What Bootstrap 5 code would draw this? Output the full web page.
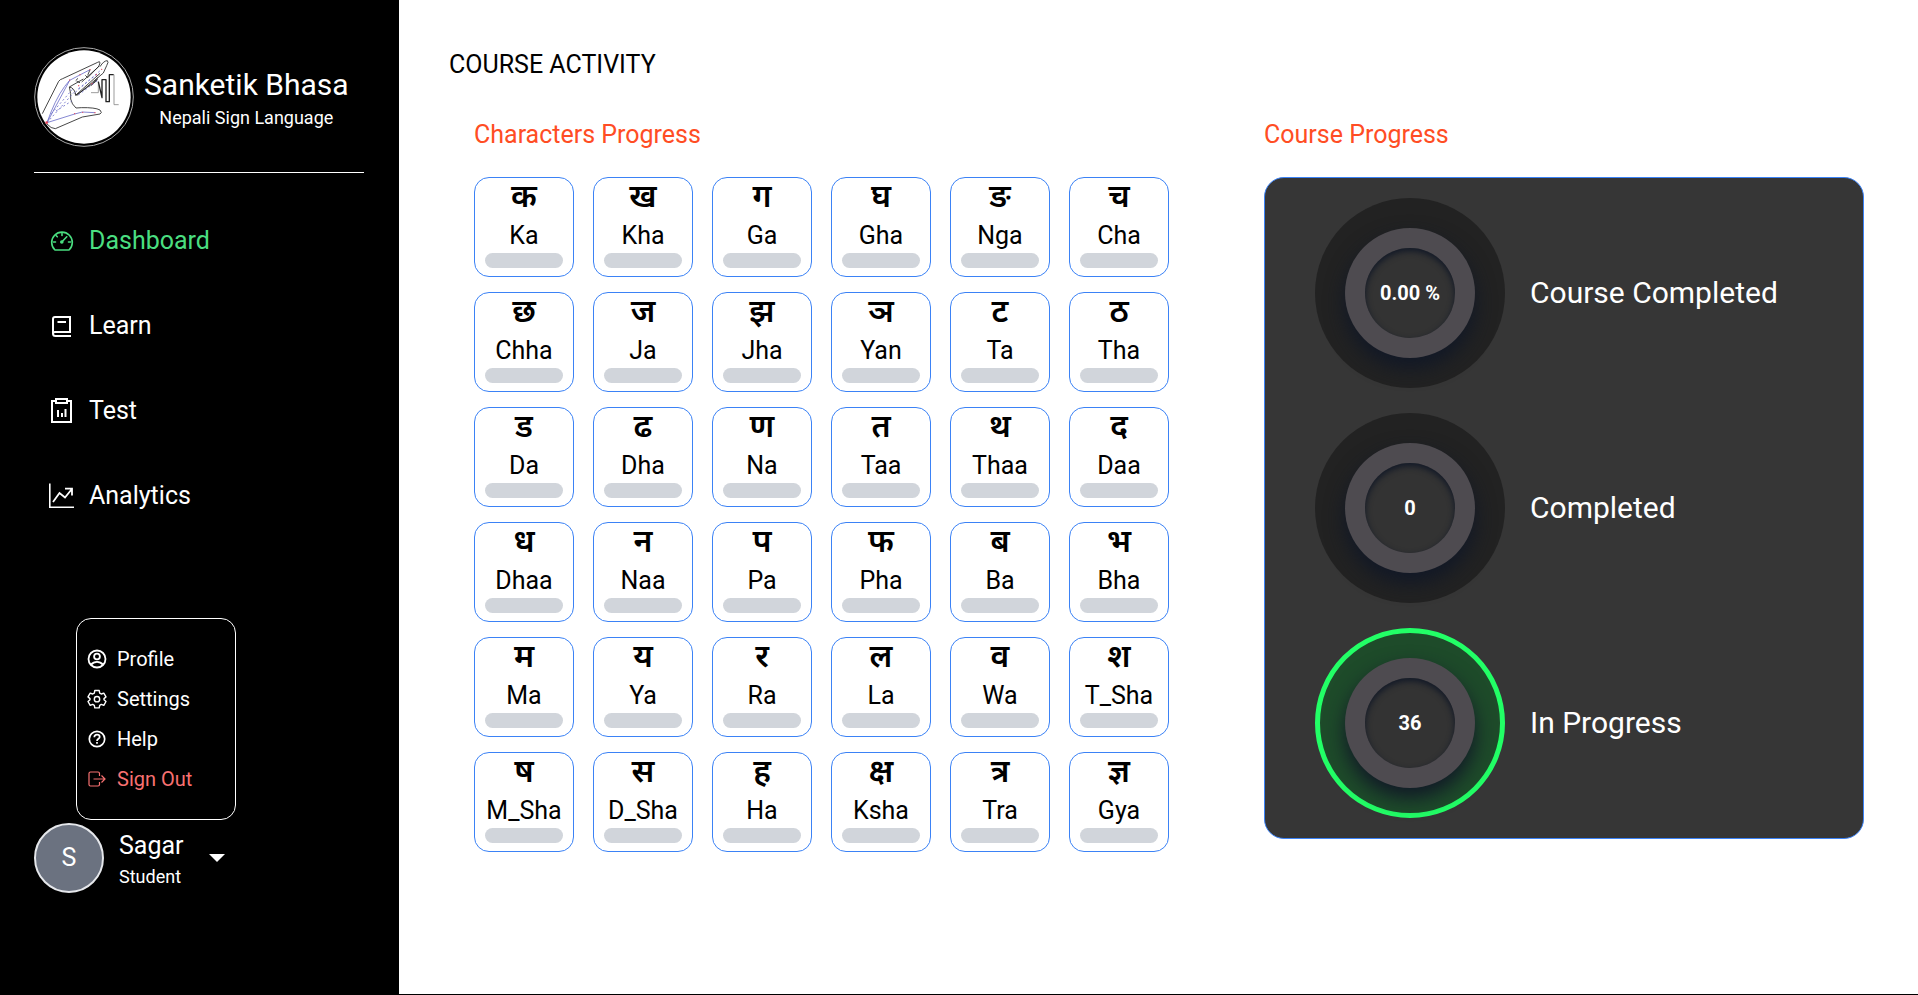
<!DOCTYPE html>
<html lang="en">
<head>
<meta charset="utf-8">
<meta name="viewport" content="width=device-width, initial-scale=1">
<title>Sanketik Bhasa</title>
<link href="https://cdn.jsdelivr.net/npm/bootstrap@5.3.0/dist/css/bootstrap.min.css" rel="stylesheet">
<style>
  body { font-family: Roboto, "Noto Sans Devanagari", "Noto Sans", sans-serif; color: #000; font-size: 25px; line-height: 36px; }
  h1, h2, h3, p { font-weight: 400; margin: 0; line-height: 36px; }
  h2, h3 { font-size: 25px; }
  .sidebar { width: 399px; padding: 47px 35px 40px 34px; }
  .brand { gap: 10px; }
  .brand-logo { width: 100px; height: 100px; }
  .brand-text { padding-top: 6px; }
  .brand-name { font-size: 30px; }
  .fine { font-size: 18px; line-height: 30px; }
  .rule { height: 1px; background: #fff; margin: 25px 0 25px; opacity: 1; border: 0; }
  .side-nav .nav-link { height: 85px; padding: 0 15px; gap: 14px; color: #fff; }
  .side-nav .nav-link.active { color: #4ade80; }
  .side-nav svg { width: 26px; height: 26px; }
  .user-menu { width: 160px; margin: 80px 0 3px 42px; padding: 20px 9px; border: 1px solid #fff; border-radius: 15px; font-size: 20px; }
  .user-menu a { height: 40px; gap: 9px; color: #fff; }
  .user-menu a.leave { color: #f87171; }
  .user-menu svg { width: 22px; height: 22px; }
  .avatar { width: 70px; height: 70px; background: #6b7280; border: 2px solid #e5e7eb; }
  .user-btn { gap: 15px; font-size: 25px; }
  .user-btn .fine { line-height: 24px; }
  .user-btn .caret { margin-left: 10px; }
  .content { padding: 47px 54px 50px 50px; border-bottom: 1px solid #000; }
  .accent { color: #ff4d24; }
  .boards { margin: 34px 0 0 25px; gap: 40px; }
  .letters { display: grid; grid-template-columns: repeat(6, 100px); gap: 15px 19px; }
  .letter { height: 100px; padding: 0 10px; border: 1px solid #3b82f6; border-radius: 15px; text-align: center; }
  .letter b { display: block; font-size: 32px; font-weight: 600; line-height: 36px; height: 40px; }
  .letter span { display: block; line-height: 35px; white-space: nowrap; margin: 0 -10px; }
  .letter .progress { height: 15px; border-radius: 8px; background: #d1d5db; }
  .course { width: 600px; }
  .panel { background: #363636; border: 1px solid #3b82f6; border-radius: 20px; padding: 20px 50px; gap: 25px; color: #fff; font-size: 30px; }
  .stat { gap: 25px; }
  .dial { width: 190px; height: 190px; background: #222; border-radius: 50%; }
  .dial.on { background: #1e4b2a; border: 5px solid #22ff66; }
  .ring { width: 130px; height: 130px; border-radius: 50%; background: #4e4b50; box-shadow: 0 10px 20px #111827; }
  .core { width: 90px; height: 90px; border-radius: 50%; background: #333; box-shadow: inset 0 3px 6px #111827; font-size: 20px; font-weight: 700; }
</style>
</head>
<body>
<div class="d-flex min-vh-100">
  <aside class="sidebar bg-black text-white flex-shrink-0">
    <header class="brand d-flex align-items-center">
      <svg class="brand-logo flex-shrink-0" viewBox="12 6 300 300" fill="none" stroke="#222" stroke-width="2.5" stroke-linejoin="round" aria-hidden="true">
        <circle cx="162" cy="156" r="148" fill="#000" stroke="#aaa" stroke-width="3"/>
        <circle cx="162" cy="156" r="140" fill="#fff" stroke="none"/>
        <path d="M37 206L86 109Q90 103 98 101L203 52Q210 47 210 54L206 65L155 111M210 65Q221 47 232 47Q237 50 230 62L220 84L142 150L134 146M210 85L140 148M204 97Q195 110 187 116L139 150M118 126Q134 128 138 153M118 126Q124 147 122 162Q125 178 138 189L154 188Q195 187 210 195Q218 204 210 207L157 216L76 251Q63 251 51 237M118 126L160 102M140 109L150 113M137 107L144 100M166 91L173 98L207 63M184 122L203 103M180 74L173 91"/>
        <g stroke="#6c6fc9" stroke-width="2.5"><path d="M51 233L119 106L180 74M51 233L63 201Q88 139 119 106M51 233L134 207L157 201L195 203"/><path stroke-dasharray="6 7" d="M51 233L132 142M64 206L130 130M78 198L125 168M136 142L215 73M145 131L199 89M145 150L205 105"/></g>
        <g fill="#e54458" stroke="none"><circle cx="50" cy="233" r="4"/><circle cx="119" cy="105" r="2"/><circle cx="150" cy="89" r="2"/><circle cx="180" cy="74" r="2"/><circle cx="215" cy="73" r="2"/><circle cx="199" cy="89" r="2"/><circle cx="146" cy="122" r="2"/><circle cx="186" cy="116" r="2"/><circle cx="134" cy="206" r="2"/><circle cx="158" cy="202" r="2"/><circle cx="195" cy="203" r="2"/></g>
        <path stroke="#888" d="M183 143H205V110M252 89V179H266"/>
        <path stroke-width="4" d="M205 110L216 158V104H228V170H238V89H251"/>
      </svg>
      <div class="brand-text text-center">
        <h1 class="brand-name">Sanketik Bhasa</h1>
        <p class="fine">Nepali Sign Language</p>
      </div>
    </header>
    <hr class="rule">
    <nav class="nav flex-column side-nav">
      <a class="nav-link active d-flex align-items-center" href="#" aria-current="page">
        <svg viewBox="0 0 26 26" fill="none" stroke="currentColor" stroke-width="1.6" stroke-linecap="round"><path d="M6 22A10.3 10.3 0 1 1 20 22Z" stroke-linejoin="round"/><path d="M13 5.5V7.5M7 7.5L8.3 8.8M4.5 14H6.5M19.5 14H21.5M17.8 8.8L12.5 14.2"/><circle cx="12.8" cy="14" r="1" fill="currentColor"/></svg>
        Dashboard</a>
      <a class="nav-link d-flex align-items-center" href="#">
        <svg viewBox="0 0 26 26" fill="none" stroke="currentColor" stroke-width="2"><path d="M22 23H6.500Q4 23 4 20.500V6Q4 4 6 4H21V19H6Q4 19 4 20.500M8.500 9H17"/></svg>
        Learn</a>
      <a class="nav-link d-flex align-items-center" href="#">
        <svg viewBox="0 0 26 26" fill="none" stroke="currentColor" stroke-width="2"><path d="M8 3H3V24H22V3H18M7 1H18V5H7Z"/><path d="M9 12V19M13 15V19M16.500 11V19"/></svg>
        Test</a>
      <a class="nav-link d-flex align-items-center" href="#">
        <svg viewBox="0 0 26 26" fill="none" stroke="currentColor" stroke-width="1.6"><path d="M.8 .5V24.200H25"/><path stroke-width="1.800" d="M4 19L10.500 10L16 14.500L22.500 6.500M16 5.700H23V12.500"/></svg>
        Analytics</a>
    </nav>
    <nav class="user-menu" aria-label="Account">
      <a class="d-flex align-items-center text-decoration-none" href="#">
        <svg viewBox="0 0 22 22" fill="none" stroke="currentColor" stroke-width="1.800"><circle cx="11" cy="11" r="8.500"/><circle cx="11" cy="8.500" r="2.900"/><path d="M4.800 16.800Q7.500 13.800 11 13.800T17.200 16.800"/></svg>
        Profile</a>
      <a class="d-flex align-items-center text-decoration-none" href="#">
        <svg viewBox="0 0 22 22" fill="none" stroke="currentColor" stroke-width="1.400" stroke-linejoin="round"><path d="M8.800 2.500H13.200L13.700 5.100L15.300 6L17.800 5.100L20 8.900L18 10.600V11.800L20 13.500L17.800 17.300L15.300 16.400L13.700 17.300L13.200 19.900H8.800L8.300 17.300L6.700 16.400L4.200 17.300L2 13.500L4 11.800V10.600L2 8.900L4.200 5.100L6.700 6L8.300 5.100Z"/><circle cx="11" cy="11.200" r="2.700"/></svg>
        Settings</a>
      <a class="d-flex align-items-center text-decoration-none" href="#">
        <svg viewBox="0 0 22 22" fill="none" stroke="currentColor" stroke-width="1.700"><circle cx="11" cy="11" r="7.700"/><path d="M8.300 9.200Q8.300 6.700 11 6.700T13.700 9C13.700 10.900 11 10.700 11 13M11 14V15.800"/></svg>
        Help</a>
      <a class="leave d-flex align-items-center text-decoration-none" href="#">
        <svg viewBox="0 0 22 22" fill="none" stroke="currentColor" stroke-width="1.200"><path d="M13.500 8V5.500Q13.500 4 12 4H4.500Q3 4 3 5.500V16.500Q3 18 4.500 18H12Q13.500 18 13.500 16.500V14M7.500 11H19M15.500 7.500L19 11L15.500 14.500"/></svg>
        Sign Out</a>
    </nav>
    <button type="button" class="user-btn btn border-0 p-0 rounded-0 text-white text-start d-flex align-items-center" aria-expanded="true">
      <span class="avatar rounded-circle d-flex align-items-center justify-content-center">S</span>
      <span><span class="d-block">Sagar</span><span class="fine d-block">Student</span></span>
      <svg class="caret" width="16" height="8" viewBox="0 0 16 8" fill="#fff" aria-hidden="true"><path d="M0 0H16L8 8Z"/></svg>
    </button>
  </aside>

  <main class="content flex-grow-1">
    <h2>COURSE ACTIVITY</h2>
    <div class="boards d-flex justify-content-between align-items-start">
      <section>
        <h3 class="accent mb-4">Characters Progress</h3>
        <div class="letters" id="letters"></div>
      </section>
      <section class="course">
        <h3 class="accent mb-4">Course Progress</h3>
        <div class="panel d-flex flex-column">
          <div class="stat d-flex align-items-center">
            <div class="dial d-flex align-items-center justify-content-center"><div class="ring d-flex align-items-center justify-content-center"><div class="core d-flex align-items-center justify-content-center">0.00 %</div></div></div>
            <span>Course Completed</span>
          </div>
          <div class="stat d-flex align-items-center">
            <div class="dial d-flex align-items-center justify-content-center"><div class="ring d-flex align-items-center justify-content-center"><div class="core d-flex align-items-center justify-content-center">0</div></div></div>
            <span>Completed</span>
          </div>
          <div class="stat d-flex align-items-center">
            <div class="dial on d-flex align-items-center justify-content-center"><div class="ring d-flex align-items-center justify-content-center"><div class="core d-flex align-items-center justify-content-center">36</div></div></div>
            <span>In Progress</span>
          </div>
        </div>
      </section>
    </div>
  </main>
</div>
<script src="https://cdn.jsdelivr.net/npm/bootstrap@5.3.0/dist/js/bootstrap.bundle.min.js"></script>
<script>
  const letters = "क Ka,ख Kha,ग Ga,घ Gha,ङ Nga,च Cha,छ Chha,ज Ja,झ Jha,ञ Yan,ट Ta,ठ Tha,ड Da,ढ Dha,ण Na,त Taa,थ Thaa,द Daa,ध Dhaa,न Naa,प Pa,फ Pha,ब Ba,भ Bha,म Ma,य Ya,र Ra,ल La,व Wa,श T_Sha,ष M_Sha,स D_Sha,ह Ha,क्ष Ksha,त्र Tra,ज्ञ Gya";
  document.getElementById("letters").innerHTML = letters.split(",").map(item => {
    const [glyph, name] = item.split(" ");
    return `<div class="letter"><b lang="hi">${glyph}</b><span>${name}</span><div class="progress" role="progressbar" aria-label="${name}" aria-valuenow="0" aria-valuemin="0" aria-valuemax="100"></div></div>`;
  }).join("");
</script>
</body>
</html>
